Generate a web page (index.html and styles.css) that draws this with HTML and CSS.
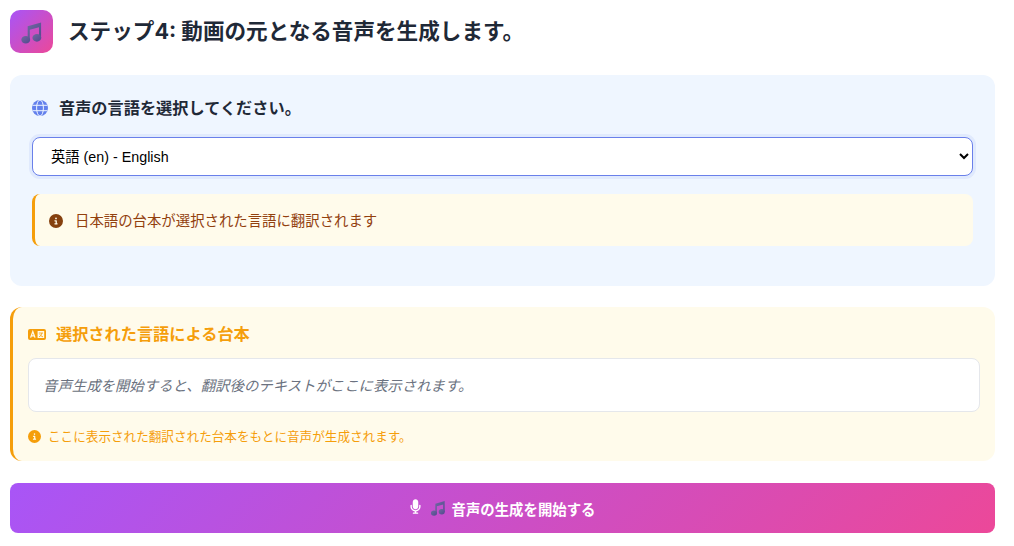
FILE: index.html
```html
<!DOCTYPE html>
<html lang="ja">
<head>
    <meta charset="utf-8">
    <title>ステップ4</title>
    <link rel="stylesheet" href="styles.css">
</head>
<body>
    <svg class="defs" width="0" height="0">
        <defs>
            <linearGradient id="note-fill" x1="0" y1="0" x2="1" y2="1">
                <stop offset="0" stop-color="#6f6aa0"/>
                <stop offset="1" stop-color="#54478f"/>
            </linearGradient>
            <symbol id="note" viewBox="0 0 24 24">
                <path d="M8 5.5 L22 1.5 V18 H19.8 V6.6 L10.2 9.2 V20 H8 Z" fill="url(#note-fill)"/>
                <ellipse cx="6" cy="19.6" rx="4.6" ry="4" fill="url(#note-fill)"/>
                <ellipse cx="17.6" cy="17.6" rx="4.6" ry="4" fill="url(#note-fill)"/>
            </symbol>
            <symbol id="info" viewBox="0 0 512 512">
                <path fill="currentColor" d="M256 512A256 256 0 1 0 256 0a256 256 0 1 0 0 512zM216 336h24V272H216c-13.3 0-24-10.7-24-24s10.7-24 24-24h48c13.3 0 24 10.7 24 24v88h8c13.3 0 24 10.7 24 24s-10.7 24-24 24H216c-13.3 0-24-10.7-24-24s10.7-24 24-24zm40-208a32 32 0 1 1 0 64 32 32 0 1 1 0-64z"/>
            </symbol>
        </defs>
    </svg>

    <div class="title-row">
        <div class="title-icon"><svg class="note-lg"><use href="#note"/></svg></div>
        <h1>ステップ4: 動画の元となる音声を生成します。</h1>
    </div>

    <section class="lang-panel">
        <h2 class="lang-heading">
            <svg class="globe" viewBox="0 0 16 16">
                <circle cx="8" cy="8" r="8" fill="#6380ec"/>
                <g fill="none" stroke="#eff6ff" stroke-width="1">
                    <ellipse cx="8" cy="8" rx="3.4" ry="8"/>
                    <path d="M0.5 5.3 H15.5 M0.5 10.7 H15.5"/>
                </g>
            </svg>
            音声の言語を選択してください。
        </h2>
        <select class="lang-select">
            <option>英語 (en) - English</option>
        </select>
        <div class="notice">
            <svg class="icon-info"><use href="#info"/></svg>
            <span>日本語の台本が選択された言語に翻訳されます</span>
        </div>
    </section>

    <section class="script-panel">
        <h3 class="script-heading">
            <svg class="lang-icon" viewBox="0 0 18 11">
                <rect width="18" height="11" rx="2" fill="#f59e0b"/>
                <path d="M2.6 8.6 L4.8 2.6 L7 8.6 M3.4 6.8 H6.2" fill="none" stroke="#fffbeb" stroke-width="1.3"/>
                <rect x="9.6" y="2" width="6.6" height="7" fill="#fffbeb"/>
                <path d="M10.8 4 H15 M13.8 4 C13.6 6 12.6 7.2 11 7.8 M11.8 5.2 C12.4 6.4 13.4 7.4 15 7.8" fill="none" stroke="#f59e0b" stroke-width="0.8"/>
            </svg>
            選択された言語による台本
        </h3>
        <div class="script-box">音声生成を開始すると、翻訳後のテキストがここに表示されます。</div>
        <p class="script-note">
            <svg class="icon-info-sm"><use href="#info"/></svg>
            <span>ここに表示された翻訳された台本をもとに音声が生成されます。</span>
        </p>
    </section>

    <button class="start-btn">
        <svg class="mic" viewBox="0 0 384 512"><path fill="currentColor" d="M192 0C139 0 96 43 96 96V256c0 53 43 96 96 96s96-43 96-96V96c0-53-43-96-96-96zM64 216c0-13.3-10.7-24-24-24s-24 10.7-24 24v40c0 89.1 66.2 162.7 152 174.4V464H120c-13.3 0-24 10.7-24 24s10.7 24 24 24h72 72c13.3 0 24-10.7 24-24s-10.7-24-24-24H216V430.4c85.8-11.7 152-85.3 152-174.4V216c0-13.3-10.7-24-24-24s-24 10.7-24 24v40c0 70.7-57.3 128-128 128s-128-57.3-128-128V216z"/></svg>
        <svg class="note-sm"><use href="#note"/></svg>
        <span>音声の生成を開始する</span>
    </button>
</body>
</html>
```

FILE: styles.css
```css
html, body {
    height: 100%;
    overflow: hidden;
}

body {
    margin: 0;
    padding: 10px 19px 0 10px;
    box-sizing: border-box;
    background: #fff;
    font-family: "Noto Sans CJK JP", "Noto Sans", sans-serif;
    color: #1f2937;
}

.defs {
    display: block;
}

.title-row {
    display: flex;
    align-items: center;
    gap: 15px;
    height: 43px;
    margin-bottom: 22px;
}

.title-icon {
    width: 43px;
    height: 43px;
    border-radius: 10px;
    background: linear-gradient(135deg, #a855f7, #ec4899);
    display: flex;
    align-items: center;
    justify-content: center;
}

.note-lg {
    width: 23px;
    height: 23px;
    margin-top: 1px;
}

h1 {
    margin: 0;
    font-family: Inter, "Noto Sans CJK JP", sans-serif;
    font-size: 21.6px;
    font-weight: 700;
    line-height: 39px;
}

.lang-panel {
    background: #eff6ff;
    border-radius: 12px;
    height: 211px;
    padding: 20px 22px 0;
    box-sizing: border-box;
    margin-bottom: 21px;
}

.lang-heading {
    display: flex;
    align-items: center;
    gap: 11px;
    margin: 0 0 18px;
    font-size: 16.2px;
    font-weight: 700;
    line-height: 24px;
    height: 24px;
}

.globe {
    width: 16px;
    height: 16px;
    margin-top: 2px;
}

.lang-select {
    display: block;
    width: 100%;
    height: 39px;
    padding: 0 14px;
    border: 1px solid #6a80ea;
    border-radius: 8px;
    background: #fff;
    box-shadow: 0 0 0 3px rgba(99, 128, 236, 0.1);
    font-family: "Liberation Sans", "Noto Sans CJK JP", sans-serif;
    font-size: 14.3px;
    color: #000;
    outline: none;
}

.notice {
    display: flex;
    align-items: center;
    gap: 12px;
    height: 52px;
    margin-top: 18px;
    padding-left: 14px;
    box-sizing: border-box;
    background: #fffbeb;
    border-left: 3px solid #f59e0b;
    border-radius: 8px;
    font-size: 14.4px;
    color: #92400e;
}

.notice span {
    margin-bottom: 2px;
}

.icon-info {
    width: 14px;
    height: 14px;
    margin-top: 2px;
    color: #85400e;
}

.script-panel {
    background: #fffbeb;
    border-left: 3px solid #f59e0b;
    border-radius: 12px;
    height: 154px;
    padding: 14px 15px 0;
    box-sizing: border-box;
    margin-bottom: 22px;
}

.script-heading {
    display: flex;
    align-items: center;
    gap: 10px;
    margin: 0 0 13px;
    height: 24px;
    font-size: 16.2px;
    font-weight: 700;
    color: #f59e0b;
}

.lang-icon {
    width: 18px;
    height: 11px;
    margin-top: 2px;
}

.script-box {
    height: 54px;
    box-sizing: border-box;
    padding: 0 14px;
    background: #fff;
    border: 1px solid #e5e7eb;
    border-radius: 8px;
    font-size: 14.4px;
    font-style: italic;
    line-height: 52px;
    color: #6b7280;
}

.script-note {
    display: flex;
    align-items: center;
    gap: 7px;
    margin: 14px 0 0;
    font-size: 12.6px;
    line-height: 20px;
    color: #f59e0b;
}

.icon-info-sm {
    width: 13px;
    height: 13px;
}

.start-btn {
    display: flex;
    align-items: center;
    justify-content: center;
    width: 100%;
    height: 50px;
    border: none;
    border-radius: 8px;
    background: linear-gradient(135deg, #a855f7, #ec4899);
    color: #fff;
    font-family: inherit;
    font-size: 14.4px;
    font-weight: 700;
    cursor: pointer;
}

.mic {
    width: 11px;
    height: 15px;
    margin: -3px 9px 0 0;
}

.note-sm {
    width: 16px;
    height: 16px;
    margin-right: 6px;
}
```
